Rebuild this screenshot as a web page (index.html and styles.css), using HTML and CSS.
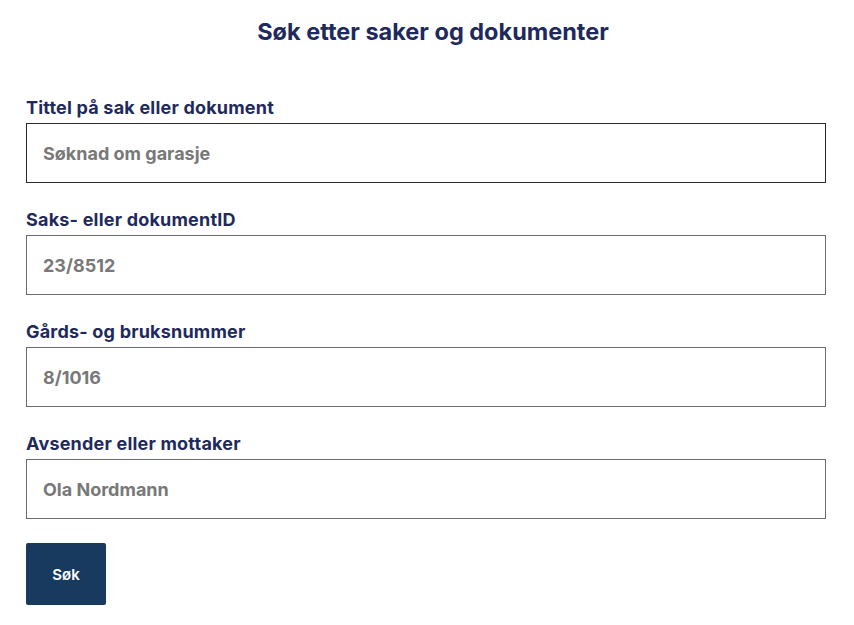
FILE: index.html
```html
<!DOCTYPE html>
<html lang="no">
<head>
<meta charset="utf-8">
<title>Søk etter saker og dokumenter</title>
<link rel="stylesheet" href="styles.css">
</head>
<body>
<main class="page">
  <h1 class="title">Søk etter saker og dokumenter</h1>
  <form class="form">
    <div class="field">
      <label class="label" for="f1">Tittel på sak eller dokument</label>
      <input class="input input-active" id="f1" type="text" placeholder="Søknad om garasje">
    </div>
    <div class="field">
      <label class="label" for="f2">Saks- eller dokumentID</label>
      <input class="input" id="f2" type="text" placeholder="23/8512">
    </div>
    <div class="field">
      <label class="label" for="f3">Gårds- og bruksnummer</label>
      <input class="input" id="f3" type="text" placeholder="8/1016">
    </div>
    <div class="field">
      <label class="label" for="f4">Avsender eller mottaker</label>
      <input class="input" id="f4" type="text" placeholder="Ola Nordmann">
    </div>
    <button class="button" type="button">Søk</button>
  </form>
</main>
</body>
</html>
```
FILE: styles.css
```css
* { box-sizing: border-box; }
html, body { margin: 0; padding: 0; background: #fff; }
body {
  font-family: "Inter", "Liberation Sans", sans-serif;
  color: #1f2a5c;
}
.page {
  width: 800px;
  margin-left: 26px;
  padding-top: 16px;
}
.title {
  margin: 0 0 49px 0;
  text-align: center;
  font-size: 23.5px;
  font-weight: 700;
  line-height: 32px;
  color: #1f2a5c;
  padding-left: 14px;
}
.form {
  display: flex;
  flex-direction: column;
  gap: 26px;
}
.field {
  display: flex;
  flex-direction: column;
  gap: 4px;
}
.label {
  font-size: 18px;
  font-weight: 700;
  line-height: 22px;
  letter-spacing: 0.2px;
  color: #1f2a5c;
}
.input {
  width: 800px;
  height: 60px;
  border: 1px solid #6b6b6b;
  border-radius: 0;
  padding: 0 16px;
  font-family: inherit;
  font-size: 18px;
  font-weight: 700;
  color: #333;
  background: #fff;
  outline: none;
}
.input-active { border-color: #2b2b2b; }
.input::placeholder { color: #787878; opacity: 1; }
.button {
  width: 80px;
  height: 62px;
  border: none;
  border-radius: 2px;
  background: #173a5e;
  color: #fff;
  font-family: inherit;
  font-size: 15px;
  font-weight: 600;
  cursor: pointer;
  padding: 0;
  margin-top: -2px;
}
```
